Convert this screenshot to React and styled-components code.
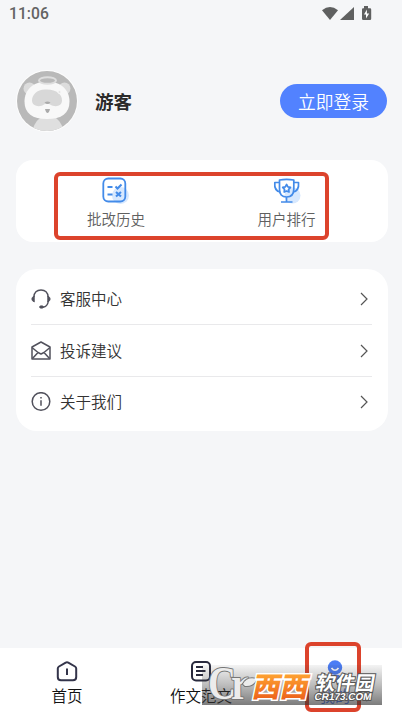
import React from "react";
import styled, { createGlobalStyle } from "styled-components";

const GlobalStyle = createGlobalStyle`
  * {
    box-sizing: border-box;
  }

  body {
    margin: 0;
    background-color: #f5f6f8;
    font-family: "Noto Sans CJK SC", sans-serif;
    font-weight: 350;
  }
`;

const Screen = styled.div`
  position: relative;
  width: 402px;
  height: 715px;
  overflow: hidden;
  display: flex;
  flex-direction: column;
  background-color: #f5f6f8;
`;

const StatusBar = styled.header`
  height: 28px;
  padding: 0 29px 0 9px;
  display: flex;
  align-items: center;
  justify-content: space-between;
  color: #636363;
`;

const Clock = styled.span`
  font-family: Roboto, sans-serif;
  font-size: 15.7px;
  font-weight: 500;
  line-height: 28px;
`;

const Profile = styled.section`
  height: 62px;
  margin: 42px 15px 0 16px;
  display: flex;
  align-items: center;
`;

const UserName = styled.h1`
  margin: 0 0 0 16px;
  flex-grow: 1;
  color: #2b2b2b;
  font-size: 18.5px;
  font-weight: 700;
  line-height: 28px;
`;

const LoginButton = styled.button`
  width: 107px;
  height: 34px;
  padding: 0;
  border: none;
  border-radius: 17px;
  background-color: #5282ff;
  color: #fff;
  font-family: inherit;
  font-weight: inherit;
  font-size: 17.8px;
  line-height: 33px;
`;

const Card = styled.section`
  margin: ${(props) => props.$top}px 14px 0 16px;
  height: ${(props) => props.$height}px;
  border-radius: ${(props) => props.$radius}px;
  background-color: #fff;
`;

const Shortcuts = styled(Card)`
  position: relative;
  display: grid;
  grid-template-columns: 170px 171px;
  padding: 15px 0 0 15px;
`;

const Shortcut = styled.div`
  display: flex;
  flex-direction: column;
  align-items: center;
  color: #606060;
  font-size: 14.5px;
  line-height: 22px;

  svg {
    margin-bottom: 3px;
  }
`;

const Highlight = styled.div`
  position: absolute;
  left: ${(props) => props.$left}px;
  top: ${(props) => props.$top}px;
  width: ${(props) => props.$width}px;
  height: ${(props) => props.$height}px;
  border: 4px solid #dc432c;
  border-radius: 6px;
`;

const Menu = styled(Card)`
  padding: 4px 16px 0 15px;
`;

const MenuRow = styled.div`
  height: 51.4px;
  display: flex;
  align-items: center;
  color: #333;
  font-size: 15.5px;
  line-height: 24px;

  & + & {
    border-top: 1.5px solid #e9e9eb;
  }
`;

const MenuLabel = styled.span`
  flex-grow: 1;
  margin-left: 9px;
  padding-bottom: 2px;
`;

const TabBar = styled.nav`
  height: 67px;
  margin-top: auto;
  padding-top: 11px;
  display: grid;
  grid-template-columns: repeat(3, 1fr);
  background-color: #fff;
`;

const Tab = styled.div`
  display: flex;
  flex-direction: column;
  align-items: center;
  color: ${(props) => (props.$active ? "#4778f4" : "#111")};
  font-size: 15.5px;
  line-height: 24px;
`;

const Watermark = styled.div`
  position: absolute;
  left: 202px;
  top: 665px;
  width: 180px;
  height: 40px;
  background: linear-gradient(
    rgba(60, 60, 60, 0.06),
    rgba(60, 60, 60, 0.34) 50%,
    rgba(50, 50, 50, 0.64)
  );
`;

const Mark = styled.svg`
  position: absolute;
  left: 0;
  top: -4px;
  overflow: visible;
`;

const StatusIcons = () => (
  <svg width="52" height="18" viewBox="0 0 52 18" fill="#5f6060">
    <path d="M1 5.2Q9-1 17 5.2L9 15Z" />
    <path d="M33 2v13H19Z" />
    <path d="M41 3.200h2V1h4v2.200h2q1.200 0 1.200 1.200v9.400q0 1.200-1.200 1.200h-6.800q-1.200 0-1.200-1.200V4.400q0-1.200 1-1.200Z" />
    <path d="M45.900 4.500 43 9.500h2V13.500l3.200-5h-2.300Z" fill="#fff" />
  </svg>
);

const Avatar = () => (
  <svg width="63" height="63" viewBox="0.5 0.5 63 63">
    <defs>
      <clipPath id="face">
        <circle cx="31.5" cy="31.5" r="30" />
      </clipPath>
    </defs>
    <circle cx="31.5" cy="31.5" r="31" fill="#fdfdfd" />
    <circle cx="31.5" cy="31.5" r="30" fill="#b9b9b9" />
    <g clipPath="url(#face)">
      <path d="M16 63q4-14 12-16h9q8 2 12 16Z" fill="#dfdfdf" />
      <circle cx="14" cy="19" r="6" fill="#dcdcdc" />
      <circle cx="49" cy="19" r="6" fill="#dcdcdc" />
      <path
        d="M31.500 12C18 12 9 20 9 32s8 17.500 22.500 17.500S54 44 54 32 45 12 31.500 12Z"
        fill="#f8f8f8"
      />
      <path
        d="M31.500 20C22 19 16.500 25 16.500 31c0 6 8 7 12 4q3-2 6 0c5 3 12 2 12-4 0-6-5-11-15-11Z"
        fill="#d8d8d8"
      />
      <ellipse cx="32" cy="11" rx="8.500" ry="3.300" fill="#b9b9b9" stroke="#dedede" strokeWidth="2" />
      <circle cx="44" cy="22.500" r="1.600" fill="#e6e6e6" stroke="#f8f8f8" />
      <path d="M29 33q3-2 6 0-3 3-6 0ZM29.500 39.500h5q-1 4-2.500 4t-2.500-4Z" fill="#aaa" />
    </g>
  </svg>
);

const HistoryIcon = () => (
  <svg width="30" height="30" viewBox="0.500 0 30 30" fill="none" stroke="#438be9" strokeWidth="1.800">
    <circle cx="20" cy="20.500" r="8.500" fill="#d7e8fe" stroke="none" />
    <rect x="2.800" y="3.500" width="22" height="23" rx="5" />
    <path d="M7 12h5M7 19.500h5" />
    <path d="m15 11.500 2 2 4-4M15.500 17l5 4.500M20.500 17l-5 4.500" strokeWidth="2.100" />
  </svg>
);

const TrophyIcon = () => (
  <svg width="30" height="30" viewBox="0 0 30 30" fill="none" stroke="#438be9" strokeWidth="1.700" strokeLinejoin="round">
    <circle cx="20.500" cy="20.500" r="8" fill="#d7e8fe" stroke="none" />
    <path d="M7.500 5Q14.500 3.800 21.800 5V14q0 8-7.200 8T7.500 14ZM14.500 22v4.500M9 27h11.500" />
    <path d="M7.500 7.500H2.800q-.8 8.500 5.500 9.500M21.800 7.500h4.700q.8 8.500-5.500 9.500" />
    <path d="m14.600 9.500 1.300 2.300 2.600.6-1.800 1.900.3 2.700-2.400-1-2.400 1 .3-2.700-1.800-1.900 2.600-.6Z" />
  </svg>
);

const ServiceIcon = () => (
  <svg width="20" height="20" viewBox="0 0 20 20" fill="none" stroke="#51515c" strokeWidth="1.400">
    <path d="M2.800 8Q3.500 1 10 1t7.200 7M17.400 12q-.8 5.500-5.400 6.300" />
    <path d="M3.300 7Q.8 8 .8 10t2.500 3ZM16.700 7q2.500 1 2.500 3t-2.500 3Z" fill="#51515c" strokeWidth=".8" />
    <ellipse cx="10.500" cy="18" rx="2" ry="1.200" fill="#51515c" strokeWidth=".8" />
  </svg>
);

const MailIcon = () => (
  <svg width="20" height="20" viewBox="0 0 20 20" fill="none" stroke="#51515c" strokeWidth="1.500" strokeLinejoin="round">
    <path d="M1 6 10 1l9 5v12H1Z" />
    <path d="m1 6.500 6 5 3 1.500 3-1.500 6-5M7 11.500 1.500 17.500M13 11.500l5.500 6" />
  </svg>
);

const InfoIcon = () => (
  <svg width="20" height="20" viewBox="0 0 20 20" fill="none" stroke="#51515c" strokeWidth="1.500">
    <circle cx="10" cy="9.500" r="8.800" />
    <path d="M10 8.300v5.400M10 5v1.600" />
  </svg>
);

const Chevron = () => (
  <svg width="16" height="16" viewBox="0 0 16 16" fill="none" stroke="#555" strokeWidth="1.200">
    <path d="m5 2 6 6-6 6" />
  </svg>
);

const HomeIcon = () => (
  <svg width="24" height="24" viewBox="0 0 24 24" fill="none" stroke="#33344a" strokeWidth="2" strokeLinejoin="round">
    <path d="M4 7.500Q2.800 8.200 2.800 9.500V18q0 3.300 3.200 3.300h12q3.200 0 3.200-3.300V9.500q0-1.300-1.200-2L13.300 3.600q-1.300-.7-2.600 0ZM12 9.500v6.500" />
  </svg>
);

const EssayIcon = () => (
  <svg width="24" height="24" viewBox="0 0 24 24" fill="none" stroke="#292a3d" strokeWidth="2">
    <rect x="3" y="3" width="18" height="18.500" rx="4" />
    <path d="M7 8h7M7 12h9.500M7 16h7" />
  </svg>
);

const MineIcon = () => (
  <svg width="24" height="24" viewBox="0 0 24 24" fill="none">
    <circle cx="12" cy="8.500" r="7.200" fill="#4b7df5" />
    <path d="M3 23q1-7.500 9-7.500t9 7.500Z" fill="#4b7df5" />
    <path d="M8.500 9q3.500 4.500 7 0" stroke="#fff" strokeWidth="1.700" />
  </svg>
);

const menuItems = [
  { label: "客服中心", icon: <ServiceIcon /> },
  { label: "投诉建议", icon: <MailIcon /> },
  { label: "关于我们", icon: <InfoIcon /> },
];

const tabs = [
  { label: "首页", icon: <HomeIcon /> },
  { label: "作文范文", icon: <EssayIcon /> },
  { label: "我的", icon: <MineIcon />, active: true },
];

const SiteMark = () => (
  <Watermark>
    <Mark width="180" height="48" viewBox="0 0 180 48">
      <defs>
        <linearGradient id="orange" x1="0" y1="0" x2="0" y2="1">
          <stop offset="0.2" stopColor="#ffa733" />
          <stop offset="1" stopColor="#e95416" />
        </linearGradient>
      </defs>
      <g
        fill="#ececec"
        stroke="#777"
        strokeWidth="2"
        paintOrder="stroke"
        strokeLinejoin="round"
        fontFamily="Liberation Serif, serif"
        fontWeight="700"
      >
        <text x="6" y="38" fontSize="46" textLength="28" lengthAdjust="spacingAndGlyphs">C</text>
        <text x="29" y="38" fontSize="46" textLength="18" lengthAdjust="spacingAndGlyphs">r</text>
        <path d="M41 23q4-8 14-5-4 8-12 7Z" />
      </g>
      <g
        fill="url(#orange)"
        stroke="#fff"
        strokeWidth="3"
        paintOrder="stroke"
        fontFamily="Noto Sans CJK SC, sans-serif"
        fontWeight="900"
        fontSize="28"
        transform="translate(6 0) skewX(-12)"
      >
        <text x="51" y="36">西</text>
        <text x="79" y="36">西</text>
      </g>
      <g
        fill="#fff"
        stroke="#555"
        strokeWidth="2"
        paintOrder="stroke"
        transform="translate(6 0) skewX(-10)"
      >
        <text x="112" y="29" fontFamily="Noto Sans CJK SC, sans-serif" fontSize="19.500" fontWeight="700" textLength="59">
          软件园
        </text>
        <text x="113" y="39" fontFamily="Liberation Sans, sans-serif" fontSize="10" fontWeight="700" textLength="57" lengthAdjust="spacingAndGlyphs">
          CR173.COM
        </text>
      </g>
    </Mark>
  </Watermark>
);

const App = () => {
  return (
    <>
      <GlobalStyle />
      <Screen>
        <StatusBar>
          <Clock>11:06</Clock>
          <StatusIcons />
        </StatusBar>

        <Profile>
          <Avatar />
          <UserName>游客</UserName>
          <LoginButton type="button">立即登录</LoginButton>
        </Profile>

        <Shortcuts $top={28} $height={82} $radius={17}>
          <Shortcut>
            <HistoryIcon />
            批改历史
          </Shortcut>
          <Shortcut>
            <TrophyIcon />
            用户排行
          </Shortcut>
          <Highlight $left={38} $top={12} $width={275} $height={68} />
        </Shortcuts>

        <Menu $top={27} $height={162} $radius={21}>
          {menuItems.map((item) => (
            <MenuRow key={item.label}>
              {item.icon}
              <MenuLabel>{item.label}</MenuLabel>
              <Chevron />
            </MenuRow>
          ))}
        </Menu>

        <TabBar>
          {tabs.map((tab) => (
            <Tab key={tab.label} $active={tab.active}>
              {tab.icon}
              {tab.label}
            </Tab>
          ))}
        </TabBar>

        <Highlight $left={305} $top={642} $width={56} $height={70} />
        <SiteMark />
      </Screen>
    </>
  );
};

export default App;
